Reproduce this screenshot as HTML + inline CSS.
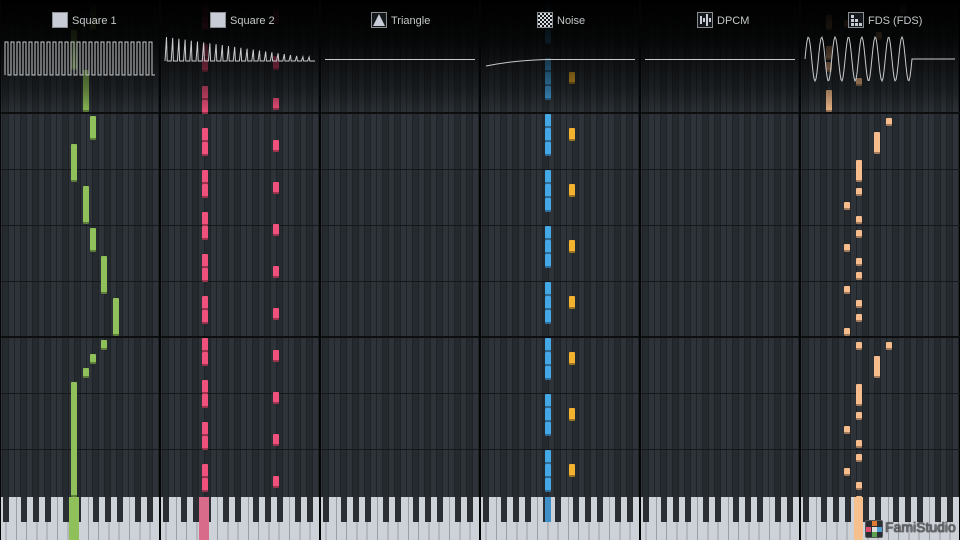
<!DOCTYPE html>
<html><head><meta charset="utf-8">
<style>
*{margin:0;padding:0;box-sizing:border-box}
body{width:960px;height:540px;overflow:hidden;background:#000;font-family:"Liberation Sans",sans-serif;position:relative}
.col{position:absolute;top:0;width:158px;height:540px;overflow:hidden;
background:repeating-linear-gradient(90deg,
#2d3338 0,#2d3338 5px,#1f2327 5px,#1f2327 6px,
#252a2e 6px,#252a2e 11px,#1f2327 11px,#1f2327 12px,
#2d3338 12px,#2d3338 17px,#1f2327 17px,#1f2327 18px,
#252a2e 18px,#252a2e 23px,#1f2327 23px,#1f2327 24px,
#2d3338 24px,#2d3338 29px,#1f2327 29px,#1f2327 30px,
#2d3338 30px,#2d3338 35px,#1f2327 35px,#1f2327 36px,
#252a2e 36px,#252a2e 41px,#1f2327 41px,#1f2327 42px,
#2d3338 42px,#2d3338 47px,#1f2327 47px,#1f2327 48px,
#252a2e 48px,#252a2e 53px,#1f2327 53px,#1f2327 54px,
#2d3338 54px,#2d3338 59px,#1f2327 59px,#1f2327 60px,
#252a2e 60px,#252a2e 65px,#1f2327 65px,#1f2327 66px,
#2d3338 66px,#2d3338 71px,#1f2327 71px,#1f2327 72px);
background-size:72px 100%}
.hl{position:absolute;left:0;width:960px;height:1px;background:#15181a}
.hl.t{height:2px;background:#0c0e0f}
.n{position:absolute;width:6px;border-radius:1px;border-bottom:2px solid rgba(0,0,0,.35)}
.hdr{position:absolute;left:0;top:0;width:960px;height:115px;background:linear-gradient(#000 0%,rgba(0,0,0,.85) 35%,rgba(0,0,0,.35) 80%,rgba(0,0,0,0) 100%)}
.lbl{position:absolute;top:12px;height:18px;color:#c4c6c8;font-size:11px;line-height:18px;white-space:nowrap}
.ic{display:inline-block;width:16px;height:16px;border:1px solid #8a8e92;background:#15181a;vertical-align:middle;margin-right:4px;position:relative;top:-1px}
.kb{position:absolute;top:497px;width:158px;height:43px;overflow:hidden;
background:repeating-linear-gradient(90deg,#cdd1d8 0,#cdd1d8 9.3px,#9a9ea5 9.3px,#9a9ea5 10.29px,#cdd1d8 10.29px,#cdd1d8 19.6px,#9a9ea5 19.6px,#9a9ea5 20.57px,#cdd1d8 20.57px,#cdd1d8 29.9px,#9a9ea5 29.9px,#9a9ea5 30.86px,#cdd1d8 30.86px,#cdd1d8 40.1px,#9a9ea5 40.1px,#9a9ea5 41.14px,#cdd1d8 41.14px,#cdd1d8 50.4px,#9a9ea5 50.4px,#9a9ea5 51.43px,#cdd1d8 51.43px,#cdd1d8 60.7px,#9a9ea5 60.7px,#9a9ea5 61.71px,#cdd1d8 61.71px,#cdd1d8 71px,#9a9ea5 71px,#9a9ea5 72px);background-size:72px 100%}
.bk{position:absolute;top:0;left:0;width:100%;height:25px;
background:repeating-linear-gradient(90deg,transparent 0,transparent 6px,#2b2f34 6px,#2b2f34 12px,transparent 12px,transparent 18px,#2b2f34 18px,#2b2f34 24px,transparent 24px,transparent 36px,#2b2f34 36px,#2b2f34 42px,transparent 42px,transparent 48px,#2b2f34 48px,#2b2f34 54px,transparent 54px,transparent 60px,#2b2f34 60px,#2b2f34 66px,transparent 66px,transparent 72px);background-size:72px 100%}
.pk{position:absolute;top:497px;height:43px}
</style></head><body>
<div id="cols"></div>
<div class="hl t" style="top:112px"></div>
<div class="hl" style="top:169px"></div>
<div class="hl" style="top:225px"></div>
<div class="hl" style="top:281px"></div>
<div class="hl t" style="top:336px"></div>
<div class="hl" style="top:393px"></div>
<div class="hl" style="top:449px"></div>
<div id="notes"></div>
<div id="kbs"></div>
<div class="pk" style="left:69px;width:10px;background:#8fc05a"></div>
<div class="pk" style="left:199px;width:10px;background:#d86a8a"></div>
<div class="pk" style="left:545px;width:6px;height:25px;background:#3f8fc8"></div>
<div class="pk" style="left:854px;width:9px;background:#f6c08e"></div>
<div class="hdr"></div>
<div id="seps"></div>
<div class="lbl" style="left:52px"><span class="ic" style="background:#c8ccd6"></span>Square 1</div>
<div class="lbl" style="left:210px"><span class="ic" style="background:#c8ccd6"></span>Square 2</div>
<div class="lbl" style="left:371px"><span class="ic"><svg width="14" height="14" style="position:absolute;left:0;top:0"><polygon points="7,1 13,13 1,13" fill="#c8ccd6"/></svg></span>Triangle</div>
<div class="lbl" style="left:537px"><span class="ic" style="background:repeating-conic-gradient(#d8dbe0 0 25%,#15181a 0 50%) 0 0/4px 4px"></span>Noise</div>
<div class="lbl" style="left:697px"><span class="ic"><svg width="14" height="14" style="position:absolute;left:0;top:0" fill="#c8ccd6"><rect x="2" y="3" width="2" height="8"/><rect x="5" y="5" width="2" height="4"/><rect x="8" y="1" width="2" height="12"/><rect x="11" y="5" width="2" height="4"/></svg></span>DPCM</div>
<div class="lbl" style="left:848px"><span class="ic"><svg width="14" height="14" style="position:absolute;left:0;top:0" fill="#c8ccd6"><rect x="2" y="2" width="3" height="3"/><rect x="2" y="6" width="3" height="3"/><rect x="6" y="6" width="3" height="3"/><rect x="2" y="10" width="3" height="3"/><rect x="6" y="10" width="3" height="3"/><rect x="10" y="10" width="3" height="3"/></svg></span>FDS (FDS)</div>
<svg width="960" height="120" style="position:absolute;left:0;top:0" fill="none" stroke="#c8cacc" stroke-width="1">
<path id="sq1"/>
<path id="sq2"/>
<path d="M325 59.5H475"/>
<path d="M486 66Q520 59 560 59.5H635"/>
<path d="M645 59.5H795"/>
<path id="fds"/>
</svg>
<div style="position:absolute;left:865px;top:520px;width:18px;height:18px;background:#2a2e33;border:1px solid #555;border-radius:2px">
<div style="position:absolute;left:6px;top:0;width:5px;height:5px;background:#e07a30"></div>
<div style="position:absolute;left:0;top:6px;width:5px;height:5px;background:#e04a6a"></div>
<div style="position:absolute;left:6px;top:6px;width:5px;height:5px;background:#ddd"></div>
<div style="position:absolute;left:11px;top:6px;width:5px;height:5px;background:#4a9ad0"></div>
<div style="position:absolute;left:6px;top:11px;width:5px;height:5px;background:#5aa050"></div>
</div>
<div style="position:absolute;left:885px;top:519px;font-size:14px;color:#6a6d70;text-shadow:0 0 1px #000,0 0 1px #000">FamiStudio</div>
<script>
var c='',k='',s='';
for(var i=0;i<6;i++){var x=i*160+1;
c+='<div class="col" style="left:'+x+'px;background-position:'+(57-1)+'px 0"></div>';
k+='<div class="kb" style="left:'+x+'px;background-position:'+(58-72-1)+'px 0"><div class="bk" style="background-position:'+(57-1)+'px 0"></div></div>';
s+='<div style="position:absolute;left:'+(i*160-1)+'px;top:0;width:2px;height:540px;background:#050505"></div>';}
document.getElementById('cols').innerHTML=c;document.getElementById('kbs').innerHTML=k;document.getElementById('seps').innerHTML=s;
var n='';function N(x,y1,y2,col){n+='<div class="n" style="left:'+x+'px;top:'+y1+'px;height:'+(y2-y1)+'px;background:'+col+'"></div>';}
var G='#8fc05a',P='#f0507c',B='#45a8e6',Y='#f2b230',O='#f6bc8c';
N(90,5,30,G);N(71,30,70,G);N(83,70,112,G);N(90,116,140,G);N(71,144,182,G);N(83,186,224,G);N(90,228,252,G);N(101,256,294,G);N(113,298,336,G);N(101,340,350,G);N(90,354,364,G);N(83,368,378,G);N(71,382,497,G);
for(var y=2;y<497;y+=42){N(202,y,y+14,P);N(202,y+14,Math.min(y+28,497),P);}
N(273,10,24,P);N(273,56,70,P);
for(var y=98;y<497;y+=42)N(273,y,y+12,P);
for(var y=2;y<497;y+=56){for(var j=0;j<3;j++){var a=y+j*14;if(a<497)N(545,a,Math.min(a+14,497),B);}}
N(569,72,84,Y);for(var y=128;y<497;y+=56)N(569,y,y+13,Y);
N(826,15,30,O);N(826,46,60,O);N(826,62,72,O);N(826,90,112,O);N(856,78,86,O);N(876,32,40,O);N(844,20,28,O);N(900,5,14,O);
for(var b=0;b<2;b++){var o=b*224;N(886,118+o,126+o,O);N(874,132+o,154+o,O);N(856,160+o,182+o,O);
for(var r=0;r<4;r++){var q=188+o+r*42;if(q<497)N(856,q,q+8,O);if(q+14<497)N(844,q+14,q+22,O);if(q+28<497)N(856,q+28,Math.min(q+36,497),O);}}
document.getElementById('notes').innerHTML=n;
var d='M5 75';for(var i=0;i<25;i++){var x=5+i*6;d+='V42H'+(x+3)+'V75H'+(x+6);}
document.getElementById('sq1').setAttribute('d',d);
d='M165 61';for(var i=0;i<24;i++){var x=165+i*6.2,h=Math.max(4,24-i*0.9);d+='L'+(x+1.5).toFixed(1)+' '+(61-h).toFixed(1)+'L'+(x+2.2).toFixed(1)+' 61H'+(x+6.2).toFixed(1);}
d+='H315';document.getElementById('sq2').setAttribute('d',d);
d='M805 59';for(var x=0;x<=107;x++){d+='L'+(805+x)+' '+(59-22*Math.sin(x/107*8*2*Math.PI)).toFixed(1);}
d+='V59H955';document.getElementById('fds').setAttribute('d',d);
</script>
</body></html>
